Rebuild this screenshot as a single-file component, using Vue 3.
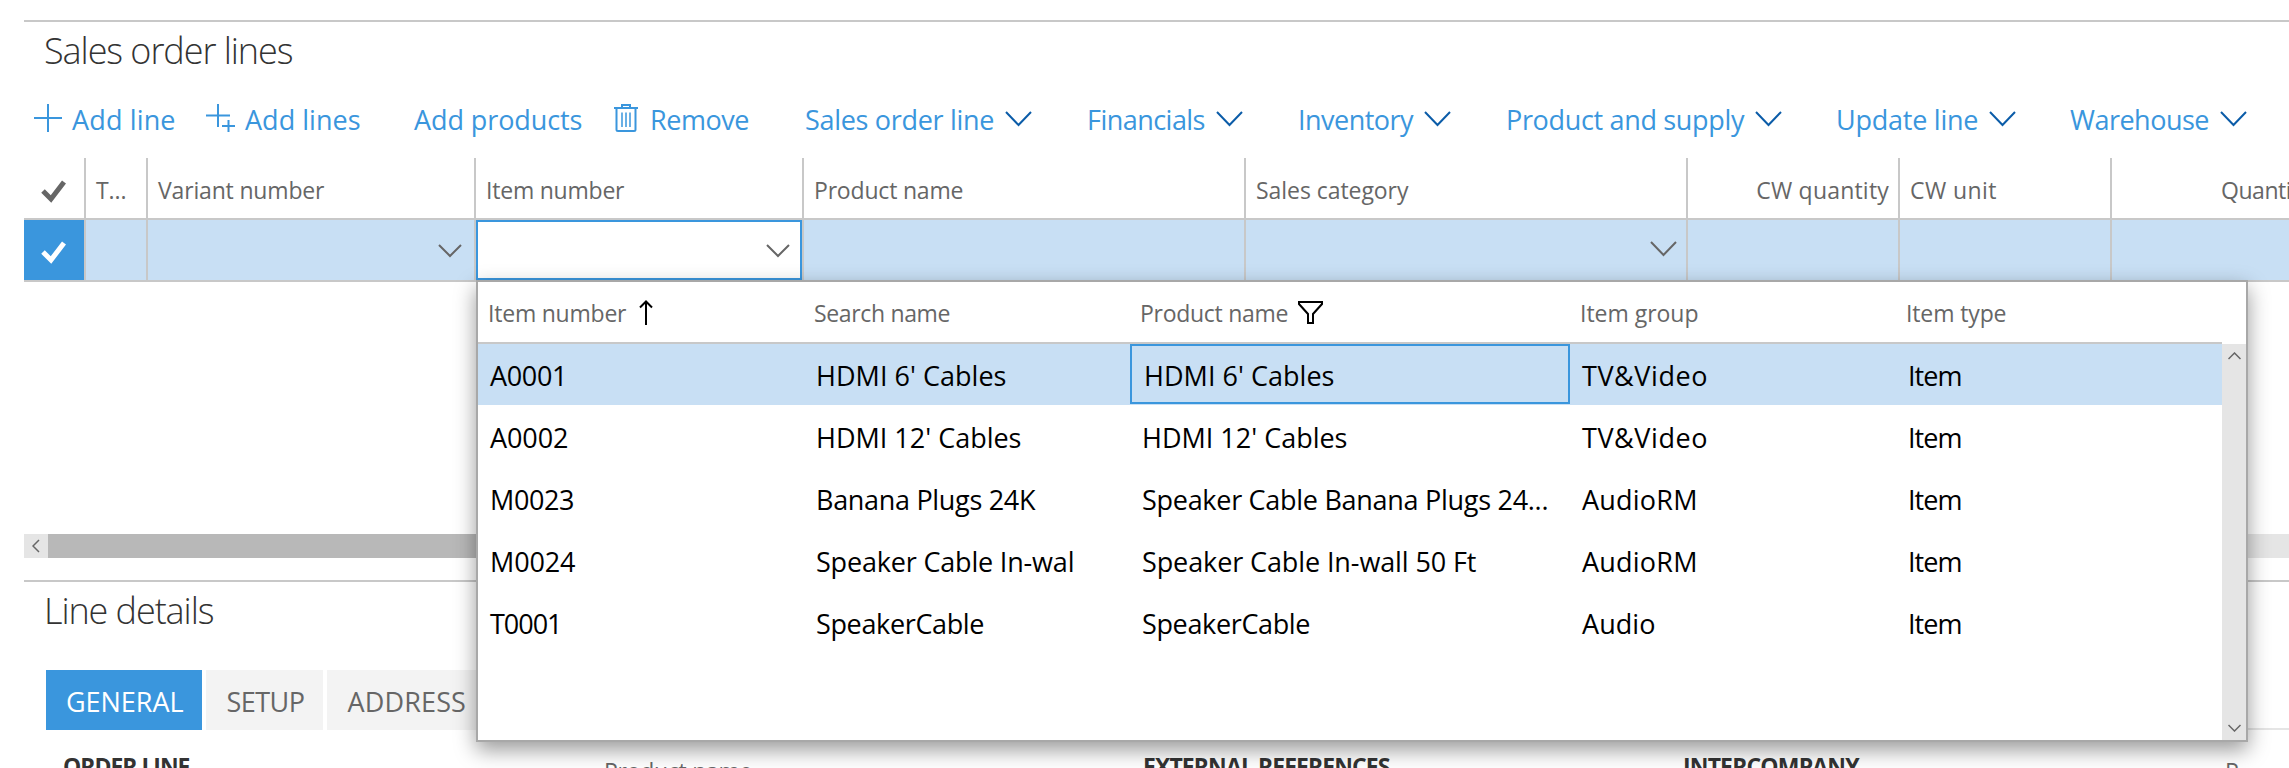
<script setup>
const commands = [
  { label: 'Add line', width: 102, icon: 'plus' },
  { label: 'Add lines', width: 114, icon: 'pluses' },
  { label: 'Add products', width: 167 },
  { label: 'Remove', width: 98, icon: 'trash' },
  { label: 'Sales order line', width: 188, menu: true },
  { label: 'Financials', width: 117, menu: true },
  { label: 'Inventory', width: 114, menu: true },
  { label: 'Product and supply', width: 237, menu: true },
  { label: 'Update line', width: 141, menu: true },
  { label: 'Warehouse', width: 138, menu: true }
]

const columns = [
  { label: 'T...', width: 29 },
  { label: 'Variant number', width: 165, menu: 'small' },
  { label: 'Item number', width: 137, menu: 'small', editing: true },
  { label: 'Product name', width: 148 },
  { label: 'Sales category', width: 151, menu: 'large' },
  { label: 'CW quantity', width: 131, right: true },
  { label: 'CW unit', width: 85 },
  { label: 'Quantity', width: 88, right: true }
]

const lookupColumns = [
  { label: 'Item number', width: 137, sorted: true },
  { label: 'Search name', width: 135 },
  { label: 'Product name', width: 147, filtered: true },
  { label: 'Item group', width: 117 },
  { label: 'Item type', width: 99 }
]

const cell = (text, width) => ({ text, width })
const items = [
  [cell('A0001', 76), cell("HDMI 6' Cables", 189), cell("HDMI 6' Cables", 189), cell('TV&Video', 124), cell('Item', 53)],
  [cell('A0002', 77), cell("HDMI 12' Cables", 204), cell("HDMI 12' Cables", 204), cell('TV&Video', 124), cell('Item', 53)],
  [cell('M0023', 83), cell('Banana Plugs 24K', 218), cell('Speaker Cable Banana Plugs 24...', 405), cell('AudioRM', 114), cell('Item', 53)],
  [cell('M0024', 84), cell('Speaker Cable In-wal', 257), cell('Speaker Cable In-wall 50 Ft', 333), cell('AudioRM', 114), cell('Item', 53)],
  [cell('T0001', 71), cell('SpeakerCable', 167), cell('SpeakerCable', 167), cell('Audio', 72), cell('Item', 53)]
]

const tabs = [
  { label: 'GENERAL', width: 116, active: true },
  { label: 'SETUP', width: 77 },
  { label: 'ADDRESS', width: 117 }
]

// Tracks a label so that its letters span the given width.
const vFit = {
  mounted(el, { value }) {
    const natural = el.getBoundingClientRect().width
    const spacing = (value + 1.5 - natural) / (el.textContent.length - 1)
    el.style.letterSpacing = `${spacing.toFixed(3)}px`
  }
}
</script>

<template>
  <main class="page">
    <section class="panel">
      <h2 class="title"><span v-fit="248">Sales order lines</span></h2>

      <nav class="toolbar">
        <a v-for="c in commands" :key="c.label" class="command">
          <svg v-if="c.icon === 'plus'" class="icon-plus" width="28" height="28" viewBox="0 0 28 28">
            <path d="M14 0V28M0 14H28" />
          </svg>
          <svg v-if="c.icon === 'pluses'" class="icon-pluses" width="29" height="28" viewBox="0 0 29 28">
            <path d="M12 0V23M0 11.5H24" />
            <path d="M22.5 16V28M16 22H29" />
          </svg>
          <svg v-if="c.icon === 'trash'" class="icon-trash" width="24" height="28" viewBox="0 0 24 28">
            <path d="M0 4H24M2.5 4V25.5Q2.5 27 4 27H20Q21.5 27 21.5 25.5V4M8 4V1H16V4" />
            <path class="thin" d="M8 8.5V23M12 8.5V23M16 8.5V23" />
          </svg>
          <span v-fit="c.width">{{ c.label }}</span>
          <svg v-if="c.menu" class="icon-menu" width="27" height="16" viewBox="0 0 27 16">
            <path d="M1 1L13.5 14L26 1" />
          </svg>
        </a>
      </nav>

      <div class="grid grid-head">
        <div class="col check-col">
          <svg width="25" height="23" viewBox="0 0 25 23"><path class="tick" d="M2 11L10 19L23 2" /></svg>
        </div>
        <div v-for="c in columns" :key="c.label" class="col" :class="{ right: c.right }">
          <span v-fit="c.width">{{ c.label }}</span>
        </div>
      </div>
      <div class="grid grid-row">
        <div class="col check-col">
          <svg width="25" height="23" viewBox="0 0 25 23"><path class="tick" d="M2 11L10 19L23 2" /></svg>
        </div>
        <div v-for="c in columns" :key="c.label" class="col" :class="[c.menu, { editing: c.editing }]">
          <svg v-if="c.menu === 'small'" width="24" height="14" viewBox="0 0 24 14"><path d="M1 1L12 12L23 1" /></svg>
          <svg v-if="c.menu === 'large'" width="27" height="16" viewBox="0 0 27 16"><path d="M1 1L13.5 14L26 1" /></svg>
        </div>
      </div>

      <div class="hscroll">
        <div class="hscroll-button">
          <svg width="8" height="14" viewBox="0 0 8 14"><path d="M7 1L1 7L7 13" /></svg>
        </div>
        <div class="hscroll-thumb"></div>
      </div>
    </section>

    <section class="panel details">
      <h2 class="title"><span v-fit="169">Line details</span></h2>
      <div class="tabs">
        <div v-for="t in tabs" :key="t.label" class="tab" :class="{ active: t.active }">
          <span v-fit="t.width">{{ t.label }}</span>
        </div>
      </div>
      <div class="fields">
        <b><span v-fit="126">ORDER LINE</span></b>
        <label><span v-fit="147">Product name</span></label>
        <b><span v-fit="246">EXTERNAL REFERENCES</span></b>
        <b><span v-fit="175">INTERCOMPANY</span></b>
        <label>P</label>
      </div>
    </section>

    <div class="lookup">
      <div class="lookup-head">
        <div v-for="c in lookupColumns" :key="c.label" class="lookup-col">
          <span v-fit="c.width">{{ c.label }}</span>
          <svg v-if="c.sorted" class="icon-sort" width="14" height="25" viewBox="0 0 14 25">
            <path d="M7 25V1.5M1 7.5L7 1.5L13 7.5" />
          </svg>
          <svg v-if="c.filtered" class="icon-filter" width="25" height="23" viewBox="0 0 25 23">
            <path d="M1 1H24V3L15 13V22H10V13L1 3Z" />
          </svg>
        </div>
      </div>
      <div class="lookup-body">
        <div class="lookup-rows">
          <div v-for="(row, r) in items" :key="r" class="lookup-row" :class="{ selected: r === 0 }">
            <div v-for="(c, i) in row" :key="i" class="lookup-cell" :class="{ focused: r === 0 && i === 2 }">
              <span v-fit="c.width">{{ c.text }}</span>
            </div>
          </div>
        </div>
        <div class="vscroll">
          <svg width="13" height="8" viewBox="0 0 13 8"><path d="M0.5 7L6.5 1L12.5 7" /></svg>
          <svg width="13" height="8" viewBox="0 0 13 8"><path d="M0.5 1L6.5 7L12.5 1" /></svg>
        </div>
      </div>
    </div>
  </main>
</template>

<style>
body {
  background: #fff;
}
</style>

<style scoped>
.page {
  position: relative;
  box-sizing: border-box;
  width: 2289px;
  height: 768px;
  padding: 20px 0 0 24px;
  overflow: hidden;
  background: #fff;
  font-family: "Open Sans", "Noto Sans", sans-serif;
  font-size: 27px;
  color: #000;
  white-space: nowrap;
}
.page * {
  box-sizing: border-box;
}
svg {
  display: block;
  flex: none;
  fill: none;
  stroke: #666;
  stroke-width: 2;
}
.panel {
  height: 560px;
  border-top: 2px solid #c8c8c8;
}
.title {
  height: 66px;
  margin: 0;
  padding-left: 20px;
  font-size: 36px;
  font-weight: 340;
  line-height: 57px;
  color: #333;
}
.toolbar {
  display: grid;
  grid-template-columns: 172px 208px 200px 191px 282px 211px 208px 330px 234px 218px;
  height: 70px;
  padding-left: 10px;
  line-height: 60px;
  color: #3a96dd;
}
.command {
  display: flex;
  align-items: center;
  height: 60px;
}
.command span {
  padding-top: 3px;
}
.command svg {
  stroke: #3a96dd;
}
.icon-plus,
.icon-pluses {
  margin-right: 10px;
}
.icon-trash {
  margin-right: 12px;
}
.thin {
  stroke-width: 1.5;
}
.command .icon-menu {
  margin: 2px 0 0 11px;
  stroke: #0b5ca8;
}
.grid {
  display: grid;
  grid-template-columns: 62px 62px 328px 328px 442px 442px 212px 212px 215px;
  overflow: hidden;
}
.col {
  display: flex;
  border-right: 2px solid #c8c8c8;
}
.col:last-child {
  width: 250px;
}
.grid-head {
  height: 62px;
  border-bottom: 2px solid #c8c8c8;
  font-size: 23px;
  line-height: 64px;
  color: #666;
}
.grid-head .col {
  padding: 0 9px 0 10px;
}
.grid-head .right {
  justify-content: flex-end;
}
.grid-head .col:last-child {
  justify-content: flex-start;
  padding-left: 109px;
}
.grid-head .check-col,
.check-col {
  align-items: center;
  padding: 3px 0 0 17px;
}
.tick {
  stroke-width: 5;
}
.grid-row {
  height: 62px;
  border-bottom: 2px solid #c8c8c8;
  background: #c8dff4;
}
.grid-row .check-col {
  background: #3a96dd;
  padding: 4px 0 0 17px;
}
.grid-row .check-col svg {
  stroke: #fff;
}
.grid-row .small,
.grid-row .large {
  justify-content: flex-end;
  padding: 24px 12px 0 0;
}
.grid-row .large {
  padding: 21px 9px 0 0;
}
.grid-row .editing {
  background: #fff;
  box-shadow: inset 0 0 0 2px #3a96dd;
}
.hscroll {
  display: flex;
  height: 24px;
  margin-top: 252px;
  background: #e5e5e5;
}
.hscroll-button {
  display: flex;
  align-items: center;
  width: 24px;
  padding-left: 8px;
}
.hscroll-button svg,
.vscroll svg {
  stroke-width: 1.5;
}
.hscroll-thumb {
  width: 1400px;
  background: #b8b8b8;
}
.details .title {
  height: 88px;
}
.tabs {
  display: flex;
  gap: 4px;
  height: 60px;
  padding-left: 22px;
  line-height: 64px;
  color: #666;
}
.tabs::after {
  content: "";
  flex: 1;
  border-bottom: 2px solid #e5e5e5;
}
.tab {
  padding: 0 19px 0 20px;
  background: #f3f3f3;
}
.tab.active {
  background: #3a96dd;
  color: #fff;
}
.fields {
  display: grid;
  grid-template-columns: 540px 540px 540px 541px auto;
  padding-left: 39px;
  font-size: 23px;
  line-height: 32px;
  color: #333;
}
.fields b {
  padding-top: 20px;
}
.fields label {
  padding: 25px 0 0 1px;
  color: #666;
}
.lookup {
  position: absolute;
  left: 476px;
  top: 280px;
  width: 1772px;
  height: 462px;
  border: 2px solid #a8a8a8;
  background: #fff;
  box-shadow: 0 8px 20px rgba(0, 0, 0, 0.4);
}
.lookup-head,
.lookup-row {
  display: grid;
  grid-template-columns: 326px 326px 440px 326px 326px;
  width: 1744px;
}
.lookup-head {
  height: 62px;
  border-bottom: 2px solid #c8c8c8;
  font-size: 23px;
  line-height: 63px;
  color: #666;
}
.lookup-col {
  display: flex;
  align-items: flex-start;
  padding-left: 10px;
}
.lookup-col svg {
  stroke: #000;
}
.icon-sort {
  margin: 18px 0 0 13px;
}
.icon-filter {
  margin: 19px 0 0 10px;
}
.lookup-body {
  display: flex;
  height: 396px;
}
.lookup-rows {
  flex: 1;
}
.lookup-row {
  height: 62px;
  line-height: 64px;
}
.lookup-row.selected {
  background: linear-gradient(#c8dff4, #c8dff4) no-repeat 0 0 / 100% 61px;
}
.lookup-cell {
  padding-left: 12px;
}
.lookup-cell.focused {
  height: 60px;
  border: 2px solid #3a96dd;
  line-height: 60px;
}
.vscroll {
  display: flex;
  flex-direction: column;
  justify-content: space-between;
  width: 24px;
  padding: 8px 0 8px 6px;
  background: #e5e5e5;
}
</style>
